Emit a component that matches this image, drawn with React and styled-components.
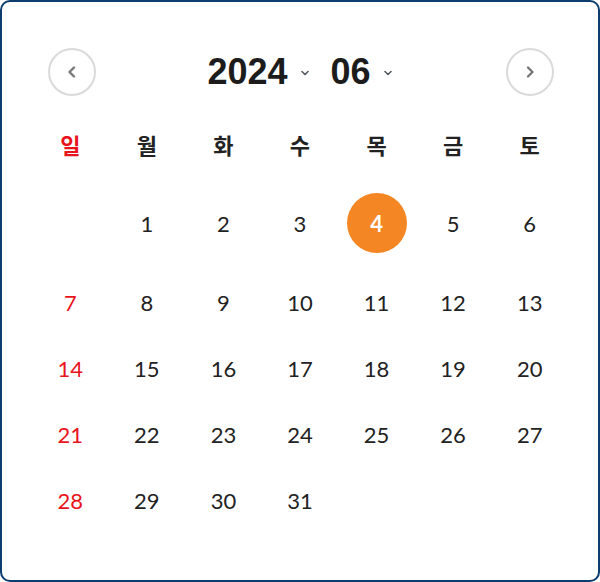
import React from "react";
import styled, { createGlobalStyle } from "styled-components";

const GlobalStyle = createGlobalStyle`
  html, body {
    margin: 0;
    padding: 0;
    background: #ffffff;
  }
  * {
    box-sizing: border-box;
  }
`;

const WEEKDAYS = ["일", "월", "화", "수", "목", "금", "토"];
const SELECTED = 4;
const FIRST_OFFSET = 1;
const DAYS_IN_MONTH = 31;

const Chevron = ({ dir }) => (
  <svg width="16" height="16" viewBox="0 0 16 16" fill="none">
    <path
      d={dir === "left" ? "M10 3.5 L5.5 8 L10 12.5" : "M6 3.5 L10.5 8 L6 12.5"}
      stroke="#787878"
      strokeWidth="2.4"
      strokeLinecap="round"
      strokeLinejoin="round"
    />
  </svg>
);

const Caret = () => (
  <svg width="10" height="8" viewBox="0 0 10 8" fill="none">
    <path
      d="M2 2.5 L5 5.5 L8 2.5"
      stroke="#555b62"
      strokeWidth="1.6"
      strokeLinecap="round"
      strokeLinejoin="round"
    />
  </svg>
);

const App = () => {
  const cells = [];
  for (let i = 0; i < FIRST_OFFSET; i++) cells.push(null);
  for (let d = 1; d <= DAYS_IN_MONTH; d++) cells.push(d);

  return (
    <>
      <GlobalStyle />
      <Frame>
        <Header>
          <NavButton>
            <Chevron dir="left" />
          </NavButton>
          <Title>
            <Select>
              <TitleText>2024</TitleText>
              <Caret />
            </Select>
            <Select>
              <TitleText>06</TitleText>
              <Caret />
            </Select>
          </Title>
          <NavButton>
            <Chevron dir="right" />
          </NavButton>
        </Header>
        <WeekRow>
          {WEEKDAYS.map((w, i) => (
            <WeekDay key={w} sunday={i === 0}>
              {w}
            </WeekDay>
          ))}
        </WeekRow>
        <DaysGrid>
          {cells.map((d, i) => (
            <DayCell key={i}>
              {d ? (
                <Day sunday={i % 7 === 0} selected={d === SELECTED}>
                  {d}
                </Day>
              ) : null}
            </DayCell>
          ))}
        </DaysGrid>
      </Frame>
    </>
  );
};

const Frame = styled.div`
  width: 600px;
  height: 582px;
  border: 2px solid #0b3d6f;
  border-radius: 10px;
  background: #ffffff;
  padding: 0 30px;
`;

const Header = styled.div`
  display: flex;
  align-items: center;
  justify-content: space-between;
  height: 48px;
  margin-top: 46px;
  padding: 0 14px 0 16px;
`;

const NavButton = styled.div`
  width: 48px;
  height: 48px;
  border-radius: 50%;
  border: 2px solid #dadada;
  display: flex;
  align-items: center;
  justify-content: center;
  cursor: pointer;
`;

const Title = styled.div`
  display: flex;
  align-items: center;
  gap: 21px;
  margin-right: 2px;
`;

const Select = styled.div`
  display: flex;
  align-items: center;
  gap: 12px;
  cursor: pointer;
  & > svg {
    margin-top: 1px;
  }
`;

const TitleText = styled.span`
  font-family: "Liberation Sans", Arial, sans-serif;
  font-weight: 700;
  font-size: 36px;
  color: #1c1c1c;
`;

const WeekRow = styled.div`
  display: grid;
  grid-template-columns: repeat(7, 1fr);
  height: 40px;
  margin-top: 28px;
  align-items: center;
`;

const WeekDay = styled.div`
  text-align: center;
  font-family: "Noto Sans CJK KR", "Noto Sans", sans-serif;
  font-weight: 700;
  font-size: 22px;
  color: ${(p) => (p.sunday ? "#e8131b" : "#222222")};
`;

const DaysGrid = styled.div`
  display: grid;
  grid-template-columns: repeat(7, 1fr);
  grid-template-rows: 92px repeat(4, 66px);
  margin-top: 13px;
  align-items: center;
`;

const DayCell = styled.div`
  display: flex;
  align-items: center;
  justify-content: center;
`;

const Day = styled.div`
  width: 60px;
  height: 60px;
  border-radius: 50%;
  display: flex;
  align-items: center;
  justify-content: center;
  font-family: Lato, "Noto Sans", sans-serif;
  font-size: 22px;
  font-weight: ${(p) => (p.selected ? 700 : 400)};
  background: ${(p) => (p.selected ? "#f58624" : "transparent")};
  color: ${(p) => (p.selected ? "#ffffff" : p.sunday ? "#e8131b" : "#222222")};
  cursor: pointer;
`;

export default App;
